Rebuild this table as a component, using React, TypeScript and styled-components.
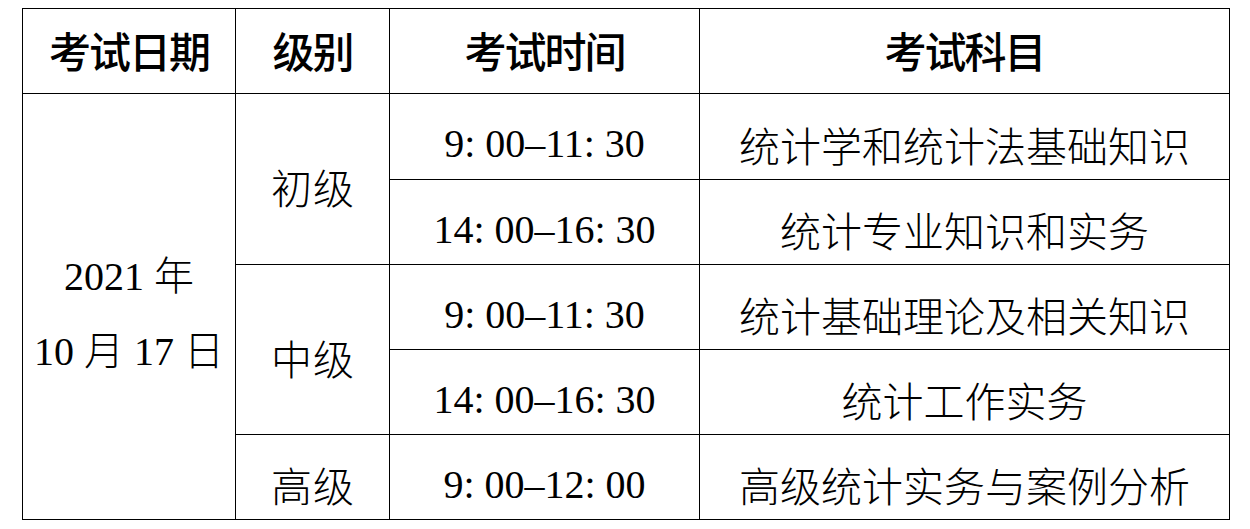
import React from "react";
import styled, { createGlobalStyle } from "styled-components";

const Global = createGlobalStyle`
  html, body { margin: 0; padding: 0; background: #ffffff; }
  body {
    font-family: "Liberation Serif", "Noto Sans CJK SC", serif;
    color: #000000;
  }
`;

const Page = styled.div`
  padding: 8px 0 0 22px;
`;

const Table = styled.table`
  border-collapse: collapse;
  table-layout: fixed;
  width: 1208px;
`;

const Col = styled.col<{ $w: number }>`
  width: ${(p) => p.$w}px;
`;

const Row = styled.tr<{ $h: number }>`
  height: ${(p) => p.$h}px;
`;

const HeadCell = styled.th`
  border: 1px solid #000;
  padding: 0 0 4px;
  font-family: "Noto Sans CJK SC", sans-serif;
  font-size: 42px;
  font-weight: 500;
  letter-spacing: -2px;
  text-align: center;
  vertical-align: middle;
  white-space: nowrap;
  color: #000;
`;

const Cell = styled.td<{ $spacing?: number; $size?: number }>`
  border: 1px solid #000;
  padding: 14px 0 0 ${(p) => p.$spacing ?? 0}px;
  font-family: "Liberation Serif", "Noto Sans CJK SC", serif;
  font-size: ${(p) => p.$size ?? 40}px;
  font-weight: 300;
  letter-spacing: ${(p) => p.$spacing ?? 0}px;
  text-align: center;
  vertical-align: middle;
  white-space: nowrap;
  color: #000;
`;

const DateLine = styled.div`
  line-height: 75px;
`;

const Time = styled.span`
  font-family: "Liberation Serif", serif;
  font-weight: 400;
`;

type SubjectRow = {
  time: string;
  subject: string;
  spacing: number;
};

const rows: SubjectRow[] = [
  { time: "9: 00–11: 30", subject: "统计学和统计法基础知识", spacing: 0 },
  { time: "14: 00–16: 30", subject: "统计专业知识和实务", spacing: 0 },
  { time: "9: 00–11: 30", subject: "统计基础理论及相关知识", spacing: 0 },
  { time: "14: 00–16: 30", subject: "统计工作实务", spacing: 0 },
  { time: "9: 00–12: 00", subject: "高级统计实务与案例分析", spacing: 0 },
];

export default function App() {
  return (
    <>
      <Global />
      <Page>
        <Table>
          <colgroup>
            <Col $w={213} />
            <Col $w={154} />
            <Col $w={310} />
            <Col $w={530} />
          </colgroup>
          <thead>
            <Row $h={85}>
              <HeadCell>考试日期</HeadCell>
              <HeadCell>级别</HeadCell>
              <HeadCell>考试时间</HeadCell>
              <HeadCell>考试科目</HeadCell>
            </Row>
          </thead>
          <tbody>
            <Row $h={86}>
              <Cell rowSpan={5}>
                <DateLine>2021 年</DateLine>
                <DateLine>10 月 17 日</DateLine>
              </Cell>
              <Cell rowSpan={2} $size={41} $spacing={1}>
                初级
              </Cell>
              <Cell>
                <Time>{rows[0].time}</Time>
              </Cell>
              <Cell $size={41} $spacing={rows[0].spacing}>
                {rows[0].subject}
              </Cell>
            </Row>
            <Row $h={85}>
              <Cell>
                <Time>{rows[1].time}</Time>
              </Cell>
              <Cell $size={41} $spacing={rows[1].spacing}>
                {rows[1].subject}
              </Cell>
            </Row>
            <Row $h={85}>
              <Cell rowSpan={2} $size={41} $spacing={1}>
                中级
              </Cell>
              <Cell>
                <Time>{rows[2].time}</Time>
              </Cell>
              <Cell $size={41} $spacing={rows[2].spacing}>
                {rows[2].subject}
              </Cell>
            </Row>
            <Row $h={85}>
              <Cell>
                <Time>{rows[3].time}</Time>
              </Cell>
              <Cell $size={41} $spacing={rows[3].spacing}>
                {rows[3].subject}
              </Cell>
            </Row>
            <Row $h={85}>
              <Cell $size={41} $spacing={1}>
                高级
              </Cell>
              <Cell>
                <Time>{rows[4].time}</Time>
              </Cell>
              <Cell $size={41} $spacing={rows[4].spacing}>
                {rows[4].subject}
              </Cell>
            </Row>
          </tbody>
        </Table>
      </Page>
    </>
  );
}
